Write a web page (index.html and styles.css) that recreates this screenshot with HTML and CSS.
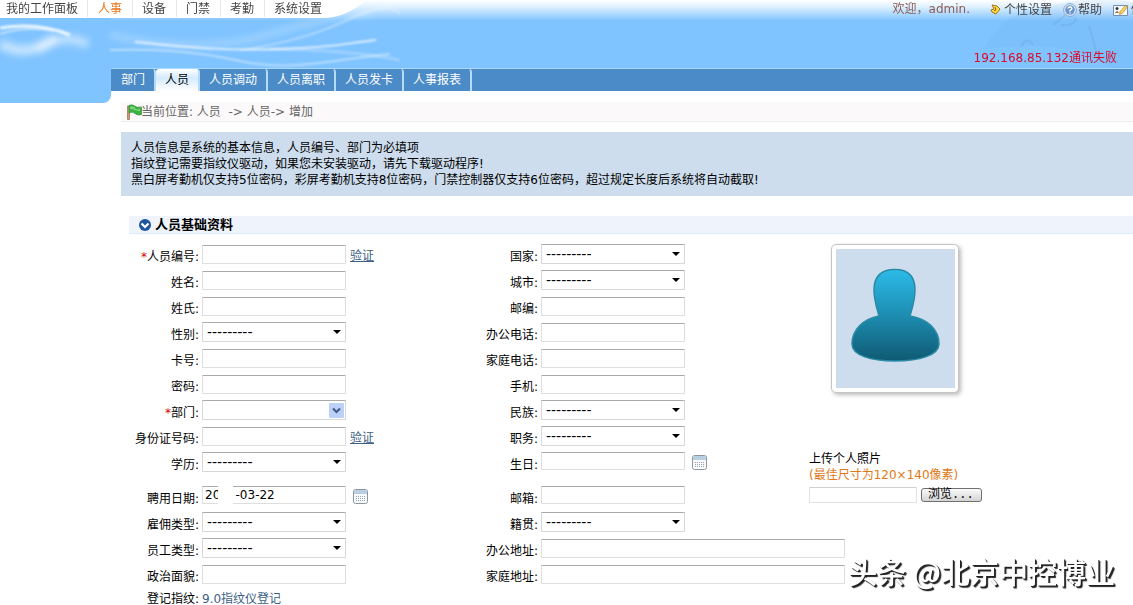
FILE: index.html
```html
<!DOCTYPE html>
<html lang="zh-CN">
<head>
<meta charset="utf-8">
<title>人员 - 增加</title>
<link rel="stylesheet" href="styles.css">
</head>
<body>
<header class="banner">
  <div class="corner"></div>
  <svg class="waves" width="400" height="72" viewBox="0 0 400 72" aria-hidden="true">
    <defs>
      <filter id="soft" x="-20%" y="-60%" width="140%" height="220%"><feGaussianBlur stdDeviation="1.3"/></filter>
      <filter id="haze" x="-30%" y="-60%" width="160%" height="220%"><feGaussianBlur stdDeviation="3.5"/></filter>
    </defs>
    <g fill="none" stroke="#fff" filter="url(#haze)">
      <path d="M0 44C20 54 34 52 56 38" stroke-width="10" opacity=".55"/>
      <path d="M38 50Q60 32 88 44" stroke-width="9" opacity=".5"/>
      <path d="M110 35Q200 55 270 34T370 14" stroke-width="5" opacity=".3"/>
    </g>
    <g fill="none" stroke="#fff" filter="url(#soft)">
      <path d="M0 28Q38 22 70 35" stroke-width="3" opacity=".85"/>
      <path d="M0 34Q24 26 54 31" stroke-width="2" opacity=".5"/>
      <path d="M110 50C150 49 190 50 240 61S330 60 390 54" stroke-width="2" opacity=".45"/>
      <path d="M135 42C190 47 220 51 280 49S340 44 376 40" stroke-width="2" opacity=".75"/>
      <path d="M240 50Q300 42 345 21T400 14" stroke-width="2" opacity=".35"/>
      <path d="M270 49Q350 50 400 60" stroke-width="3" opacity=".25"/>
    </g>
  </svg>
  <svg class="clock" width="150" height="68" viewBox="0 0 150 68" aria-hidden="true">
    <path d="M0 49C18 25 24 15 55 8S110 -4 150 2V68H128Q90 38 0 49z" fill="#5d9ed8" opacity=".1"/>
    <path d="M70 25L84 14M78 25Q92 27 93 17M38 47q6-12 12-2M106 26L113 50" fill="none" stroke="#5b94cc" stroke-width="2" opacity=".22"/>
  </svg>
  <div class="topbar">
    <nav class="modules">
      <a href="#">我的工作面板</a><a href="#" class="current">人事</a><a href="#">设备</a><a href="#">门禁</a><a href="#">考勤</a><a href="#">系统设置</a>
      <svg class="curve" width="50" height="18" viewBox="0 0 50 18" aria-hidden="true"><path d="M0 0H44Q24 18 0 18z" fill="#fff"/></svg>
    </nav>
    <div class="account">
      <span class="welcome">欢迎，admin.</span>
      <a href="#"><svg width="11" height="11" viewBox="0 0 11 11"><path d="M2 1L7 2L10 5L6 10L2 8L1 6L4 5z" fill="#ffdf43" stroke="#a17016"/><path d="M5 3L6 6L4 7" fill="none" stroke="#915c12"/></svg>个性设置</a>
      <a href="#"><svg width="14" height="14" viewBox="0 0 14 14"><circle cx="7" cy="7" r="6.3" fill="#eef5ff" stroke="#7e9fca"/><circle cx="7" cy="7" r="4.8" fill="#6b94cf"/><path d="M5 5.5Q5.2 4 7 4T9 5.5Q9 6.5 7 7.4V8.4M7 9.4V10.6" fill="none" stroke="#fff" stroke-width="1.4"/></svg>帮助</a>
      <a href="#"><svg width="15" height="12" viewBox="0 0 15 12"><path d="M.5 1.5H14.5V11.5H.5z" fill="#f4f8ff" stroke="#7590b5"/><circle cx="4" cy="4.5" r="1.5" fill="#333"/><path d="M2 9Q4 5 6 9z" fill="#b96c43"/><path d="M6.5 10.5L7 7.8L12.5 1.5L14.3 3.2L9 9.5z" fill="#ffd758" stroke="#a98028" stroke-width=".7"/></svg>修</a>
    </div>
  </div>
  <p class="alert">192.168.85.132通讯失败</p>
  <nav class="tabs">
    <a href="#">部门</a><a href="#" class="active">人员</a><a href="#">人员调动</a><a href="#">人员离职</a><a href="#">人员发卡</a><a href="#">人事报表</a>
  </nav>
</header>

<main>
  <div class="crumbs">
    <svg width="17" height="16" viewBox="0 0 17 16" aria-hidden="true"><path d="M1.5 2H3.5V15.5H1.5z" fill="#c99670" stroke="#8f5c38" stroke-width=".6"/><path d="M3 1.5Q6 0 8.500 2T15.500 3V10.500Q12 12 9 9.500T3 9z" fill="#3fb145" stroke="#2b8d35" stroke-width=".7"/><path d="M4 2.500Q7 1.500 9 4T14 4.500V7Q11 7 9 6T4 5z" fill="#93e58c" opacity=".7"/></svg>
    <span>当前位置: 人员 &nbsp;-&gt; 人员-&gt; 增加</span>
  </div>
  <div class="notice">
    <p>人员信息是系统的基本信息，人员编号、部门为必填项</p>
    <p>指纹登记需要指纹仪驱动，如果您未安装驱动，请先下载驱动程序!</p>
    <p>黑白屏考勤机仅支持5位密码，彩屏考勤机支持8位密码，门禁控制器仅支持6位密码，超过规定长度后系统将自动截取!</p>
  </div>
  <section class="panel">
    <h2><svg width="12" height="12" viewBox="0 0 12 12" aria-hidden="true"><circle cx="6" cy="6" r="6" fill="#1d559f"/><path d="M2.500 4.500L6 8L9.500 4.500" fill="none" stroke="#fff" stroke-width="2.200"/></svg>人员基础资料</h2>
    <form class="form">
      <label for="pin"><i>*</i>人员编号:</label><div class="field"><input id="pin" type="text"><a href="#">验证</a></div>
      <label for="country">国家:</label><div class="field"><select id="country"><option>---------</option></select></div>

      <label for="name">姓名:</label><div class="field"><input id="name" type="text"></div>
      <label for="city">城市:</label><div class="field"><select id="city"><option>---------</option></select></div>

      <label for="surname">姓氏:</label><div class="field"><input id="surname" type="text"></div>
      <label for="zip">邮编:</label><div class="field"><input id="zip" type="text"></div>

      <label for="sex">性别:</label><div class="field"><select id="sex"><option>---------</option></select></div>
      <label for="ophone">办公电话:</label><div class="field"><input id="ophone" type="text"></div>

      <label for="card">卡号:</label><div class="field"><input id="card" type="text"></div>
      <label for="hphone">家庭电话:</label><div class="field"><input id="hphone" type="text"></div>

      <label for="pwd">密码:</label><div class="field"><input id="pwd" type="password"></div>
      <label for="mobile">手机:</label><div class="field"><input id="mobile" type="text"></div>

      <label for="dept"><i>*</i>部门:</label><div class="field"><select id="dept" class="picker"><option></option></select></div>
      <label for="nation">民族:</label><div class="field"><select id="nation"><option>---------</option></select></div>

      <label for="idno">身份证号码:</label><div class="field"><input id="idno" type="text"><a href="#">验证</a></div>
      <label for="title">职务:</label><div class="field"><select id="title"><option>---------</option></select></div>

      <label for="edu">学历:</label><div class="field"><select id="edu"><option>---------</option></select></div>
      <label for="birth">生日:</label><div class="field"><input id="birth" class="date" type="text"><button type="button" class="cal" aria-label="选择生日"><svg width="15" height="15" viewBox="0 0 15 15"><rect x=".5" y=".5" width="14" height="14" rx="2" fill="#f9fafb" stroke="#8d969e"/><path d="M1 1H14V5H1z" fill="#b9cfe2"/><path d="M3 7.500H13M3 9.500H13M3 11.500H13" stroke="#9aa4ad" stroke-dasharray="1 1"/></svg></button></div>

      <label class="gap" for="hire">聘用日期:</label><div class="field gap"><input id="hire" class="date" type="text" value="20    -03-22"><span class="blank"></span><button type="button" class="cal" aria-label="选择聘用日期"><svg width="15" height="15" viewBox="0 0 15 15"><rect x=".5" y=".5" width="14" height="14" rx="2" fill="#f9fafb" stroke="#8d969e"/><path d="M1 1H14V5H1z" fill="#b9cfe2"/><path d="M3 7.500H13M3 9.500H13M3 11.500H13" stroke="#9aa4ad" stroke-dasharray="1 1"/></svg></button></div>
      <label class="gap" for="mail">邮箱:</label><div class="field gap"><input id="mail" class="date" type="text"></div>

      <label for="hiretype">雇佣类型:</label><div class="field"><select id="hiretype"><option>---------</option></select></div>
      <label for="native">籍贯:</label><div class="field"><select id="native"><option>---------</option></select></div>

      <label for="emptype">员工类型:</label><div class="field"><select id="emptype"><option>---------</option></select></div>
      <label for="oaddr">办公地址:</label><div class="field wide"><input id="oaddr" type="text"></div>

      <label for="politics">政治面貌:</label><div class="field"><input id="politics" type="text"></div>
      <label for="haddr">家庭地址:</label><div class="field wide"><input id="haddr" type="text"></div>

      <span class="caption">登记指纹:</span><div class="field last"><a href="#" class="plain">9.0指纹仪登记</a></div>

      <div class="portrait">
        <div class="photo">
          <svg width="119" height="139" viewBox="0 0 119 139" role="img" aria-label="照片">
            <defs><linearGradient id="body" x1="0" y1="0" x2="0" y2="1"><stop offset="0" stop-color="#2cbbe8"/><stop offset=".5" stop-color="#1d8db1"/><stop offset="1" stop-color="#0f5a73"/></linearGradient></defs>
            <path d="M59 20.500C72 20.500 79 27 79 41C79 51 76 60 74 67C92 70 103 81 103 95C103 106 84 112 59 112S16 106 16 95C16 81 27 70 43 67C41 60 38 51 38 41C38 27 46 20.500 59 20.500z" fill="url(#body)" stroke="#2b8aa6" stroke-width="1.500"/>
          </svg>
        </div>
        <div class="upload">
          <label for="photofile">上传个人照片</label>
          <p>(最佳尺寸为120×140像素)</p>
          <div class="file"><input id="photofile" type="text"><button type="button">浏览...</button></div>
        </div>
      </div>
    </form>
  </section>
</main>
<div class="mark">头条 @北京中控博业</div>
</body>
</html>
```
FILE: styles.css
```css
* { box-sizing: border-box; }
body {
  margin: 0;
  min-height: 100vh;
  overflow: hidden;
  background: #fff;
  color: #000;
  font: 12px/16px "DejaVu Sans", "Noto Sans CJK SC", sans-serif;
}
p, h2 { margin: 0; }
a { color: #3c5f85; text-decoration: none; }
svg { flex: none; }

.banner {
  position: relative;
  background: linear-gradient(#fff 0, #e4f3ff 6px, #7fc3ff 21px);
}
.corner {
  position: absolute;
  top: 18px;
  left: 0;
  width: 111px;
  height: 85px;
  background: #7fc3ff;
  border-radius: 0 0 8px 0;
}
.waves { position: absolute; top: 0; left: 0; }
.clock { position: absolute; top: 0; right: 0; }
.topbar {
  position: relative;
  display: flex;
  justify-content: space-between;
  height: 18px;
  overflow: hidden;
  white-space: nowrap;
}
.modules {
  display: flex;
  background: linear-gradient(#fff, #fff) no-repeat 0 0 / calc(100% - 50px) 100%;
}
.modules a {
  height: 17px;
  padding: 1px 10px 0;
  color: #444;
  border-right: 1px solid #e6e6e6;
}
.modules a:first-child { padding: 1px 9px 0 6px; }
.modules a:nth-of-type(n+3) { padding-left: 9px; }
.modules a:last-of-type { padding-right: 0; border: 0; }
.modules .current { color: #e8761c; }
.account { display: flex; gap: 11px; padding-top: 1px; margin-right: -10px; }
.account a { display: flex; align-items: center; gap: 3px; color: #444; }
.account a:nth-of-type(2) { gap: 1px; }
.account .welcome { margin-right: 9px; color: #8e5a50; }
.alert {
  position: relative;
  padding: 32px 16px 2px;
  color: #dd0a2a;
  text-align: right;
}
.tabs {
  position: relative;
  display: flex;
  height: 23px;
  margin-left: 111px;
  background: #4b8bc7;
  border-top: 1px solid #a9d8fc;
}
.tabs a {
  height: 22px;
  padding: 3px 9px 0;
  color: #fff;
  border-right: 2px solid #b4dcfa;
  border-radius: 3px 3px 0 0;
}
.tabs a:first-child { padding-left: 10px; }
.tabs .active {
  color: #000;
  background: linear-gradient(#fff, #d3eaff 9px, #fff);
}

main { padding-left: 121px; }
.crumbs {
  display: flex;
  align-items: center;
  height: 20px;
  margin-top: 11px;
  padding-left: 5px;
  color: #666;
  background: #fcf9fa;
  border-bottom: 1px solid #eee;
}
.crumbs svg { margin-right: -2px; }
.notice {
  margin-top: 10px;
  padding: 8px 10px;
  background: #cddded;
}
.panel { margin: 20px 0 0 8px; }
.panel h2 {
  display: flex;
  align-items: center;
  gap: 4px;
  height: 18px;
  padding-left: 10px;
  font-size: 13px;
  line-height: 17px;
  background: #eff3fc;
  border-bottom: 1px solid #dceaf7;
}

.form {
  display: grid;
  grid-template-columns: 73px 266fr 73px 268fr 324fr;
  grid-auto-rows: minmax(26px, auto);
  padding-top: 8px;
}
.form > label, .caption { padding: 7px 3px 0 0; text-align: right; white-space: nowrap; }
.form > label i { color: #d40000; font-style: normal; }
.form > label:nth-of-type(odd), .caption { grid-column: 1; }
.form > label:nth-of-type(even) { grid-column: 3; }
.field {
  position: relative;
  display: flex;
  align-items: flex-end;
  gap: 4px;
  height: 26px;
  padding-bottom: 4px;
}
.field a { text-decoration: underline; }
.field .plain { text-decoration: none; }
.form > label.gap { padding-top: 15px; }
.field.gap { height: 34px; }
.field.wide { grid-column: 4 / 6; }
.form > .caption { padding-top: 3px; }
.field.last { height: 19px; padding: 0; }

input, select {
  width: 144px;
  height: 19px;
  margin: 0;
  padding: 0 2px;
  font: inherit;
  color: #000;
  background: #fff;
  border: 1px solid #dedede;
  border-top-color: #aaa;
  border-radius: 1px;
}
.wide input { width: 304px; }
.date { height: 18px; }
.date, .cal { margin-bottom: 2px; }
select {
  height: 20px;
  padding: 0 4px;
  font-size: 14px;
  line-height: 16px;
  appearance: none;
  background: url("data:image/svg+xml,%3Csvg xmlns='http://www.w3.org/2000/svg' width='8' height='4'%3E%3Cpath d='M0 0H8L4 4z'/%3E%3C/svg%3E") no-repeat right 4px center;
  border-color: #aaa #d8d8d8 #d8d8d8;
}
.picker {
  background: url("data:image/svg+xml,%3Csvg xmlns='http://www.w3.org/2000/svg' width='15' height='15'%3E%3Crect width='15' height='15' rx='1' fill='%23bcd0f8'/%3E%3Cpath d='M4 5.500L7.500 9L11 5.500' fill='none' stroke='%23425f8c' stroke-width='2.200'/%3E%3C/svg%3E") no-repeat right 1px center;
}
.cal { display: flex; margin-left: 3px; padding: 0; border: 0; background: none; }
.blank { position: absolute; top: 8px; left: 16px; width: 15px; height: 22px; background: #fff; }

.portrait { grid-column: 5; grid-row: 1 / 11; }
.photo {
  display: flex;
  width: 128px;
  height: 149px;
  margin: 2px 0 0 22px;
  padding: 4px;
  background: #fff;
  border: 1px solid #c8c4c4;
  border-radius: 5px;
  box-shadow: 2px 2px 4px #bbb;
}
.photo svg { background: #cddded; }
.upload { margin-top: 58px; }
.upload p { color: #e07818; }
.file { display: flex; align-items: center; gap: 4px; margin-top: 4px; }
.file input { width: 108px; height: 16px; border-color: #d0d0d0 #e2e2e2 #e2e2e2; }
.file button {
  width: 61px;
  height: 14px;
  padding: 0 6px;
  font: 12px/12px "Liberation Mono", "Noto Sans CJK SC", monospace;
  text-align: left;
  color: #000;
  background: linear-gradient(#fafafa, #d4d4d4);
  border: 1px solid #707070;
  border-radius: 3px;
}
.mark {
  position: fixed;
  right: 18px;
  bottom: 14px;
  color: #fff;
  font: 500 29px/40px "Noto Sans CJK SC", sans-serif;
  text-shadow: 1px 1px 0 #222, 2px 2px 1px #222;
}
```
